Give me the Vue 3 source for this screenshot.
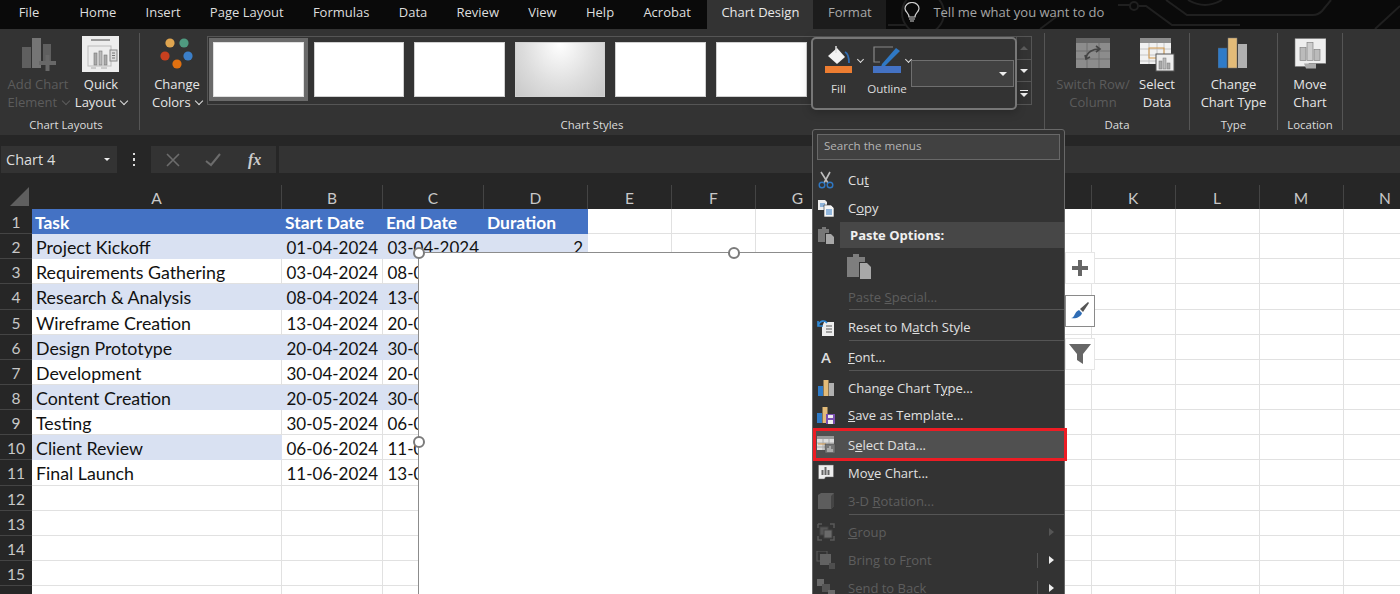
<template>
  <div class="excel">
    <!-- tab strip -->
    <div class="tabbar">
      <svg class="circuit" width="1400" height="29" viewBox="0 0 1400 29">
        <g fill="none" stroke="#202020" stroke-width="2">
          <circle cx="923" cy="13" r="21" />
          <path d="M1118 5 H1130 M1139 6 H1146 L1172 25 H1240" />
          <circle cx="1134" cy="6" r="4" />
          <path d="M1166 0 L1187 15 H1313 Q1318 15 1322 11 L1331 0" />
          <path d="M1188 0 Q1205 10 1222 0" />
          <path d="M1375 29 L1400 6" />
          <path d="M888 25 H905 M1040 29 L1060 14" />
        </g>
      </svg>
      <div v-for="tab in tabs" :key="tab" class="tab" :class="tabClass(tab)">{{ tab }}</div>
      <svg class="bulb" width="16" height="22" viewBox="0 0 16 22">
        <path d="M5 15 C5 11 1 10 1 6.5 A7 6 0 0 1 15 6.5 C15 10 11 11 11 15 Z" fill="none" stroke="#d0d0d0" stroke-width="1.2" />
        <path d="M5 17 H11 M6 19 H10" stroke="#d0d0d0" stroke-width="1.2" />
      </svg>
      <div class="tell">Tell me what you want to do</div>
    </div>

    <!-- ribbon -->
    <div class="ribbon">
      <div class="group layouts">
        <div class="group-body">
          <div class="rbtn w76 off">
            <svg class="ricon" width="36" height="34" viewBox="0 0 36 34">
              <rect x="2" y="10" width="9" height="21" fill="#5f5f5f" />
              <rect x="12" y="1" width="9" height="30" fill="#757575" />
              <rect x="23" y="7" width="8" height="18" fill="#5f5f5f" />
              <rect x="19" y="24" width="17" height="4" fill="#686868" />
              <rect x="25.5" y="18" width="4" height="16" fill="#686868" />
            </svg>
            <div>Add Chart</div>
            <div>Element <span class="chev off-chev"></span></div>
          </div>
          <div class="rbtn w50">
            <svg class="ricon" width="38" height="36" viewBox="0 0 38 36">
              <rect width="37" height="36" fill="#ededed" />
              <rect x="9" y="3" width="19" height="2" fill="#999" />
              <rect x="6" y="10" width="23" height="20" fill="none" stroke="#bbb" />
              <rect x="12" y="17" width="3" height="12" fill="#aaa" stroke="#777" stroke-width=".6" />
              <rect x="17" y="15" width="3" height="14" fill="#bbb" stroke="#777" stroke-width=".6" />
              <rect x="22" y="19" width="3" height="10" fill="#aaa" stroke="#777" stroke-width=".6" />
              <rect x="28" y="14" width="7" height="11" fill="#ddd" stroke="#888" />
              <path d="M30 17 H33 M30 19.5 H33 M30 22 H33" stroke="#777" />
              <path d="M9 32 H14 M19 32 H25" stroke="#aaa" />
            </svg>
            <div>Quick</div>
            <div>Layout <span class="chev"></span></div>
          </div>
        </div>
        <div class="group-label">Chart Layouts</div>
      </div>
      <div class="sep"></div>

      <div class="group styles">
        <div class="group-body">
          <div class="rbtn w60">
            <svg class="ricon" width="34" height="34" viewBox="0 0 34 34">
              <circle cx="10" cy="6" r="4.6" fill="#dfa550" />
              <circle cx="24" cy="6" r="4.6" fill="#4f9a80" />
              <circle cx="5" cy="19" r="4.6" fill="#c8401f" />
              <circle cx="28" cy="19" r="4.6" fill="#3b7fc9" />
              <circle cx="17" cy="27" r="4.6" fill="#e07010" />
            </svg>
            <div>Change</div>
            <div>Colors <span class="chev"></span></div>
          </div>
          <div class="gallery">
            <div class="thumbs">
              <div v-for="n in 6" :key="n" class="thumb" :class="{ picked: n === 1, shaded: n === 4 }"></div>
            </div>
            <div class="scroller">
              <div class="scroll-btn"><span class="tri up"></span></div>
              <div class="scroll-btn"><span class="tri"></span></div>
              <div class="scroll-btn"><span class="tri lined"></span></div>
            </div>
          </div>
        </div>
        <div class="group-label">Chart Styles</div>
      </div>
      <div class="sep"></div>

      <div class="group data">
        <div class="group-body">
          <div class="rbtn w76 off">
            <svg class="ricon" width="36" height="32" viewBox="0 0 36 32">
              <rect x="1" width="34" height="30" fill="#8c8c8c" />
              <rect x="1" width="34" height="5" fill="#666" />
              <path d="M1 13 H35 M1 21 H35 M12 5 V30 M24 5 V30" stroke="#6e6e6e" />
              <path d="M11 20 C12 14 18 11 24 11 M21 8 L25 11 L21 14 M10 17 L11 21 L15 19" fill="none" stroke="#444" stroke-width="1.6" />
            </svg>
            <div>Switch Row/</div>
            <div>Column</div>
          </div>
          <div class="rbtn w52">
            <svg class="ricon" width="36" height="34" viewBox="0 0 36 34">
              <rect x="1" y="1" width="31" height="26" fill="#f1f1f1" />
              <rect x="1" y="1" width="31" height="5" fill="#8d8d8d" />
              <path d="M1 12 H32 M1 18 H32 M1 24 H32 M10 6 V27 M18 6 V27 M25 6 V27" stroke="#c4c4c4" />
              <rect x="10" y="11" width="15" height="10" fill="none" stroke="#d59a4a" />
              <rect x="17" y="17" width="18" height="17" fill="#eee" stroke="#555" />
              <rect x="20" y="24" width="3" height="8" fill="#aaa" stroke="#777" stroke-width=".5" />
              <rect x="24" y="21" width="3" height="11" fill="#bbb" stroke="#777" stroke-width=".5" />
              <rect x="28" y="26" width="3" height="6" fill="#aaa" stroke="#777" stroke-width=".5" />
            </svg>
            <div>Select</div>
            <div>Data</div>
          </div>
        </div>
        <div class="group-label">Data</div>
      </div>
      <div class="sep"></div>

      <div class="group type">
        <div class="group-body center">
          <div class="rbtn">
            <svg class="ricon" width="30" height="32" viewBox="0 0 30 32">
              <rect y="10" width="9" height="20" fill="#2f7bc8" stroke="#555" stroke-width=".5" />
              <rect x="10" width="9" height="30" fill="#e3bb78" stroke="#777" stroke-width=".5" />
              <rect x="20" y="6" width="9" height="24" fill="#b0b0b0" />
            </svg>
            <div>Change</div>
            <div>Chart Type</div>
          </div>
        </div>
        <div class="group-label">Type</div>
      </div>
      <div class="sep"></div>

      <div class="group location">
        <div class="group-body center">
          <div class="rbtn">
            <svg class="ricon" width="32" height="35" viewBox="0 0 32 35">
              <path d="M1 2 H32 V27 H15 L13 30 H1 Z" fill="#eee" stroke="#777" stroke-width=".6" />
              <path d="M10 27 L12 32 H22 L22 27" fill="#aaa" />
              <rect x="6" y="11" width="6" height="13" fill="#bbb" stroke="#777" stroke-width=".6" />
              <rect x="13" y="6" width="6" height="18" fill="#ccc" stroke="#777" stroke-width=".6" />
              <rect x="20" y="13" width="6" height="11" fill="#bbb" stroke="#777" stroke-width=".6" />
            </svg>
            <div>Move</div>
            <div>Chart</div>
          </div>
        </div>
        <div class="group-label">Location</div>
      </div>
      <div class="sep"></div>
    </div>

    <!-- name box and formula bar -->
    <div class="formula">
      <div class="namebox">Chart 4<span class="tri small"></span></div>
      <div class="dots"><i></i><i></i><i></i></div>
      <div class="fbtns">
        <svg width="14" height="14" viewBox="0 0 14 14"><path d="M1 1 L13 13 M13 1 L1 13" stroke="#6c6c6c" stroke-width="1.6" /></svg>
        <svg width="16" height="14" viewBox="0 0 16 14"><path d="M1 8 L6 12 L15 1" fill="none" stroke="#6c6c6c" stroke-width="2" /></svg>
        <span class="fx">fx</span>
      </div>
      <div class="finput"></div>
    </div>

    <!-- sheet -->
    <div class="sheet">
      <div class="corner"><span></span></div>
      <div v-for="c in columns" :key="c" class="colhead">{{ c }}</div>
      <template v-for="(row, r) in rows" :key="r">
        <div class="rowhead">{{ r < 15 ? r + 1 : '' }}</div>
        <div v-for="(cell, i) in row" :key="i" class="cell" :class="cell.cls">{{ cell.text }}</div>
      </template>
    </div>

    <!-- selected chart -->
    <div class="chart">
      <span class="handle h-tl"></span>
      <span class="handle h-tm"></span>
      <span class="handle h-ml"></span>
    </div>

    <!-- chart side buttons -->
    <div class="side side-plus">
      <svg width="16" height="16" viewBox="0 0 16 16"><path d="M0 6 H6 V0 H10 V6 H16 V10 H10 V16 H6 V10 H0 Z" fill="#666" /></svg>
    </div>
    <div class="side side-brush">
      <svg width="20" height="20" viewBox="0 0 20 20">
        <path d="M10 8 L18 1 L19 2 L13 11 Z" fill="#555" />
        <path d="M1 17 C5 17 4 11 9 9 L12 12 C11 16 6 18 1 17 Z" fill="#2f6db5" />
      </svg>
    </div>
    <div class="side side-filter">
      <svg width="22" height="22" viewBox="0 0 22 22"><path d="M0 1 H22 L14 11 V21 L8 17 V11 Z" fill="#666" /></svg>
    </div>

    <!-- mini toolbar -->
    <div class="mini">
      <div class="mini-item fill">
        <svg width="28" height="27" viewBox="0 0 28 27">
          <path d="M3 10 L12 2 L20 11 L12 18 Z" fill="#f2f2f2" />
          <path d="M11 0 V7" stroke="#ddd" stroke-width="1.5" />
          <path d="M20 6 Q24 8 24 17" fill="none" stroke="#2f6db5" stroke-width="1.8" />
          <rect y="20" width="27" height="7" fill="#ed7d31" />
        </svg>
        <span class="chev mini-chev"></span>
        <div>Fill</div>
      </div>
      <div class="mini-item outline">
        <svg width="29" height="27" viewBox="0 0 29 27">
          <path d="M20 1 H1 V16 H7" fill="none" stroke="#888" stroke-width="1.2" />
          <path d="M9 18 L23 2 L27 5 L12 20 L8 21 Z" fill="#2f78c4" />
          <rect y="20" width="28" height="7" fill="#4472c4" />
        </svg>
        <span class="chev mini-chev"></span>
        <div>Outline</div>
      </div>
      <div class="combo"><span class="tri"></span></div>
    </div>

    <!-- context menu -->
    <div class="menu">
      <div class="search">Search the menus</div>

      <div class="mrow">
        <svg class="micon" width="18" height="18" viewBox="0 0 18 18">
          <path d="M4 1 L11 12 M13 1 L7 12" stroke="#bdbdbd" stroke-width="1.6" />
          <circle cx="5" cy="14" r="2.8" fill="none" stroke="#2f78c4" stroke-width="1.4" />
          <circle cx="13" cy="14" r="2.8" fill="none" stroke="#2f78c4" stroke-width="1.4" />
        </svg>
        <span class="mtext">Cu<u>t</u></span>
      </div>
      <div class="mrow">
        <svg class="micon" width="18" height="18" viewBox="0 0 18 18">
          <path d="M1 1 H8 L10 3 V11 H1 Z" fill="#eee" />
          <path d="M3 5 H8 M3 7 H8" stroke="#2f78c4" />
          <path d="M7 6 H14 L17 9 V18 H7 Z" fill="#f6f6f6" stroke="#333" stroke-width=".6" />
          <path d="M9 11 H15 M9 13 H15 M9 15 H15" stroke="#2f78c4" />
        </svg>
        <span class="mtext">C<u>o</u>py</span>
      </div>
      <div class="mrow h26">
        <svg class="micon" width="18" height="18" viewBox="0 0 18 18">
          <path d="M1 3 H5 V1 H9 V3 H12 V7 H8 V16 H1 Z" fill="#777" />
          <path d="M9 8 H14 L17 11 V18 H9 Z" fill="#a8a8a8" />
        </svg>
        <div class="paste-band">Paste Options:</div>
      </div>
      <div class="mrow h37">
        <svg class="paste-big" width="25" height="27" viewBox="0 0 25 27">
          <path d="M0 4 H6 V1 H12 V4 H18 V9 H12 V24 H0 Z" fill="#7e7e7e" />
          <path d="M13 10 H20 L24 14 V26 H13 Z" fill="#a8a8a8" />
        </svg>
      </div>
      <div class="mrow h24 off">
        <span class="micon"></span>
        <span class="mtext">Paste <u>S</u>pecial...</span>
      </div>
      <div class="msep"></div>
      <div class="mrow h30 pad">
        <svg class="micon" width="20" height="18" viewBox="0 0 20 18">
          <path d="M8 4 H18 V18 H6 V9 Z" fill="#eee" />
          <path d="M10 8 H16 M10 11 H16 M10 14 H16" stroke="#555" />
          <path d="M2 3 V8 H7 M2 8 C4 2 9 2 11 5" fill="none" stroke="#2f8ad8" stroke-width="1.6" />
        </svg>
        <span class="mtext">Reset to M<u>a</u>tch Style</span>
      </div>
      <div class="msep"></div>
      <div class="mrow h29 pad">
        <span class="micon letter">A</span>
        <span class="mtext"><u>F</u>ont...</span>
      </div>
      <div class="msep"></div>
      <div class="mrow h31 pad">
        <svg class="micon" width="16" height="16" viewBox="0 0 16 16">
          <rect y="6" width="5" height="10" fill="#2f7bc8" />
          <rect x="5.5" width="5" height="16" fill="#e3bb78" />
          <rect x="11" y="3" width="5" height="13" fill="#b0b0b0" />
        </svg>
        <span class="mtext">Change Chart T<u>y</u>pe...</span>
      </div>
      <div class="mrow h26">
        <svg class="micon" width="18" height="18" viewBox="0 0 18 18">
          <rect y="7" width="5" height="10" fill="#2f7bc8" />
          <rect x="5.5" y="1" width="5" height="16" fill="#e3bb78" />
          <rect x="9" y="8" width="9" height="10" fill="#7a4fb0" />
          <rect x="11" y="9" width="5" height="3" fill="#eee" />
          <rect x="11" y="14" width="5" height="4" fill="#eee" />
        </svg>
        <span class="mtext"><u>S</u>ave as Template...</span>
      </div>
      <div class="mrow picked">
        <svg class="micon" width="18" height="17" viewBox="0 0 18 17">
          <rect width="17" height="14" fill="#ddd" />
          <rect width="17" height="3" fill="#999" />
          <path d="M0 7 H17 M0 11 H17 M6 3 V14 M12 3 V14" stroke="#aaa" />
          <path d="M1 8 H9" stroke="#d59a4a" />
          <rect x="8" y="8" width="10" height="9" fill="#777" stroke="#444" stroke-width=".5" />
          <path d="M11 16 V12 M13 16 V10 M15 16 V13" stroke="#ddd" />
        </svg>
        <span class="mtext">S<u>e</u>lect Data...</span>
      </div>
      <div class="mrow h23">
        <svg class="micon" width="17" height="17" viewBox="0 0 17 17">
          <path d="M1 1 H16 V13 H8 L7 15 H1 Z" fill="#eee" stroke="#666" stroke-width=".5" />
          <path d="M5 11 V6 M8 11 V3 M11 11 V6" stroke="#666" stroke-width="2" />
        </svg>
        <span class="mtext">Mo<u>v</u>e Chart...</span>
      </div>
      <div class="mrow h30 pad off">
        <svg class="micon" width="16" height="16" viewBox="0 0 16 16">
          <path d="M0 2 L3 0 H16 V13 L13 16 H0 Z" fill="#5d5d5d" />
          <path d="M13 3 L16 0 V13 L13 16 Z" fill="#444" />
        </svg>
        <span class="mtext">3-D <u>R</u>otation...</span>
      </div>
      <div class="msep"></div>
      <div class="mrow h31 pad off">
        <svg class="micon" width="18" height="18" viewBox="0 0 18 18">
          <path d="M1 1 H5 M13 1 H17 V5 M17 13 V17 H13 M5 17 H1 V13 M1 5 V1" fill="none" stroke="#5a5a5a" stroke-width="1.5" />
          <rect x="3" y="4" width="8" height="8" fill="#565656" stroke="#444" />
          <rect x="7" y="7" width="8" height="8" fill="#6a6a6a" stroke="#444" />
        </svg>
        <span class="mtext"><u>G</u>roup</span>
        <span class="arrow dim"></span>
      </div>
      <div class="mrow off">
        <svg class="micon" width="18" height="18" viewBox="0 0 18 18">
          <rect y="0" width="10" height="10" fill="none" stroke="#5a5a5a" />
          <rect x="3" y="3" width="11" height="11" fill="#626262" />
          <rect x="12" y="12" width="6" height="6" fill="#4e4e4e" />
        </svg>
        <span class="mtext">Bring to F<u>r</u>ont</span>
        <span class="split"></span><span class="arrow"></span>
      </div>
      <div class="mrow off">
        <svg class="micon" width="18" height="18" viewBox="0 0 18 18">
          <rect width="7" height="7" fill="#6a6a6a" />
          <rect x="5" y="5" width="8" height="8" fill="#555" />
          <rect x="11" y="11" width="7" height="7" fill="#6a6a6a" />
        </svg>
        <span class="mtext">Send to Bac<u>k</u></span>
        <span class="split"></span><span class="arrow"></span>
      </div>
    </div>
  </div>
</template>

<script setup>
import { computed } from 'vue'

const tabs = ['File', 'Home', 'Insert', 'Page Layout', 'Formulas', 'Data', 'Review', 'View', 'Help', 'Acrobat', 'Chart Design', 'Format']
const columns = ['A', 'B', 'C', 'D', 'E', 'F', 'G', 'H', 'I', 'J', 'K', 'L', 'M', 'N']

const tasks = [
  ['Project Kickoff', '01-04-2024', '03-04-2024', '2'],
  ['Requirements Gathering', '03-04-2024', '08-04-2024', '5'],
  ['Research & Analysis', '08-04-2024', '13-04-2024', '5'],
  ['Wireframe Creation', '13-04-2024', '20-04-2024', '7'],
  ['Design Prototype', '20-04-2024', '30-04-2024', '10'],
  ['Development', '30-04-2024', '20-05-2024', '20'],
  ['Content Creation', '20-05-2024', '30-05-2024', '10'],
  ['Testing', '30-05-2024', '06-06-2024', '7'],
  ['Client Review', '06-06-2024', '11-06-2024', '5'],
  ['Final Launch', '11-06-2024', '13-06-2024', '2']
]

function tabClass(tab) {
  return {
    'tab-file': tab === 'File',
    'tab-active': tab === 'Chart Design',
    'tab-format': tab === 'Format'
  }
}

// header row, ten task rows, then empty rows down to the window edge
const rows = computed(() => {
  const out = []
  const header = ['Task', 'Start Date', 'End Date', 'Duration']
  out.push(columns.map((c, i) => (i < 4 ? { text: header[i], cls: 'head' } : { text: '', cls: '' })))
  tasks.forEach((task, r) => {
    out.push(columns.map((c, i) => {
      if (i > 3) return { text: '', cls: '' }
      // row 10 only has the first column banded
      const shaded = r % 2 === 0 && (r !== 8 || i === 0)
      return { text: task[i], cls: { shaded, num: i > 0 } }
    }))
  })
  for (let r = 0; r < 5; r++) {
    out.push(columns.map(() => ({ text: '', cls: '' })))
  }
  return out
})
</script>

<style scoped>
.excel {
  position: relative;
  width: 1400px;
  height: 594px;
  overflow: hidden;
  background: #262626;
  display: flex;
  flex-direction: column;
  font-family: 'Open Sans', 'Noto Sans', sans-serif;
  color: #e6e6e6;
}

.tabbar {
  position: relative;
  height: 29px;
  flex: none;
  background: #0a0a0a;
  display: flex;
  align-items: stretch;
  font-size: 13px;
  line-height: 25px;
}
.circuit {
  position: absolute;
  left: 0;
  top: 0;
}
.tab {
  position: relative;
  padding: 0 14.65px;
  color: #dedede;
  white-space: nowrap;
}
.tab-file {
  margin-left: 4px;
  margin-right: 11px;
}
.tab-active {
  margin-left: 2px;
  padding: 0 14px;
  background: #333;
  color: #e8e8e8;
}
.tab-format {
  background: #1c1c1c;
  color: #a8a8a8;
}
.bulb {
  position: relative;
  margin: 2px 13px 0 18px;
}
.tell {
  position: relative;
  color: #a5a5a5;
  white-space: nowrap;
}

.ribbon {
  height: 106px;
  flex: none;
  background: #333;
  display: flex;
  font-size: 13px;
}
.group {
  display: flex;
  flex-direction: column;
  flex: none;
}
.layouts { width: 139px; }
.styles { width: 904px; }
.data { width: 144px; }
.type { width: 87px; }
.location { width: 64px; }
.group-body {
  flex: 1;
  display: flex;
  min-height: 0;
}
.group-body.center {
  justify-content: center;
}
.styles .group-body { padding-left: 7px; }
.data .group-body { padding-left: 10px; }
.group-label {
  height: 20px;
  line-height: 20px;
  text-align: center;
  font-size: 11.4px;
  color: #dcdcdc;
}
.layouts .group-label { padding-right: 7px; }
.sep {
  width: 1px;
  flex: none;
  margin: 4px 0 5px;
  background: #555;
}
.rbtn {
  padding-top: 7px;
  display: flex;
  flex-direction: column;
  align-items: center;
  line-height: 18px;
  white-space: nowrap;
}
.rbtn.off { color: #5c5c5c; }
.w76 { width: 76px; }
.w50 { width: 50px; }
.w52 { width: 52px; }
.w60 { width: 60px; flex: none; }
.ricon {
  height: 36px;
  margin-bottom: 3px;
  flex: none;
}
.chev {
  display: inline-block;
  width: 5px;
  height: 5px;
  margin: 0 0 3px 2px;
  border-right: 1.5px solid #ddd;
  border-bottom: 1.5px solid #ddd;
  transform: rotate(45deg);
}
.off-chev {
  border-color: #5c5c5c;
}

.gallery {
  width: 825px;
  height: 69px;
  margin-top: 7px;
  flex: none;
  display: flex;
  border: 1px solid #555;
  box-sizing: border-box;
}
.thumbs {
  flex: 1;
  display: flex;
  gap: 10px;
  padding: 5px 0 0 5px;
}
.thumb {
  width: 90.6px;
  height: 55px;
  flex: none;
  background: #fff;
  border: 1px solid #d0d0d0;
  box-sizing: border-box;
}
.thumb.picked {
  outline: 4px solid #6a6a6a;
  border-color: #e0e0e0;
}
.thumb.shaded {
  background: radial-gradient(ellipse at 50% 0, #fff 0, #dcdcdc 60%, #c8c8c8 100%);
}
.scroller {
  width: 14px;
  flex: none;
  border-left: 1px solid #555;
  display: flex;
  flex-direction: column;
}
.scroll-btn {
  flex: 1;
  display: flex;
  align-items: center;
  justify-content: center;
  border-bottom: 1px solid #555;
}
.scroll-btn:last-child { border-bottom: 0; }
.tri {
  display: inline-block;
  width: 0;
  height: 0;
  border-left: 4px solid transparent;
  border-right: 4px solid transparent;
  border-top: 4px solid #eee;
}
.tri.up {
  border-top: 0;
  border-bottom: 4px solid #5c5c5c;
}
.tri.lined {
  position: relative;
  margin-top: 4px;
}
.tri.lined::before {
  content: '';
  position: absolute;
  left: -4px;
  top: -7px;
  width: 8px;
  height: 1px;
  background: #eee;
}

.formula {
  height: 50px;
  flex: none;
  box-sizing: border-box;
  padding: 11px 0 12px 1px;
  display: flex;
  background: #262626;
}
.namebox {
  width: 116px;
  background: #333;
  font-size: 14.5px;
  line-height: 27px;
  padding-left: 5px;
  box-sizing: border-box;
  display: flex;
  align-items: center;
  justify-content: space-between;
  padding-right: 7px;
  color: #ddd;
}
.tri.small {
  border-left-width: 3px;
  border-right-width: 3px;
  border-top-width: 3px;
}
.dots {
  width: 34px;
  display: flex;
  flex-direction: column;
  align-items: center;
  justify-content: center;
  gap: 3px;
}
.dots i {
  width: 2.5px;
  height: 2.5px;
  background: #ddd;
}
.fbtns {
  width: 125px;
  background: #333;
  display: flex;
  align-items: center;
  gap: 25px;
  padding-left: 15px;
  box-sizing: border-box;
}
.fx {
  font-family: 'Liberation Serif', serif;
  font-style: italic;
  font-weight: 700;
  font-size: 16px;
  color: #ccc;
  margin-left: 2px;
}
.finput {
  flex: 1;
  margin-left: 3px;
  background: #333;
}

.sheet {
  display: grid;
  grid-template-columns: 32px 250px 101px 101px 104px 84px 84px 84px 84px 84px 84px 83.5px 84px 84px 84px;
  grid-template-rows: 24px;
  grid-auto-rows: 25.15px;
  font-family: Lato, 'Open Sans', sans-serif;
}
.corner {
  background: #262626;
  position: relative;
}
.corner span {
  position: absolute;
  left: 10px;
  top: 2px;
  width: 0;
  height: 0;
  border-left: 19px solid transparent;
  border-bottom: 19px solid #5f5f5f;
}
.colhead {
  background: #262626;
  border-right: 1px solid #444;
  box-sizing: border-box;
  text-align: center;
  line-height: 26px;
  font-size: 15.5px;
  color: #c8c8c8;
}
.rowhead {
  background: #262626;
  border-bottom: 1px solid #444;
  box-sizing: border-box;
  text-align: center;
  line-height: 26px;
  font-size: 15.5px;
  color: #c8c8c8;
}
.cell {
  background: #fff;
  color: #111;
  border-right: 1px solid #e1e1e1;
  border-bottom: 1px solid #e1e1e1;
  box-sizing: border-box;
  font-size: 17.8px;
  line-height: 27px;
  padding: 0 4px;
  white-space: nowrap;
  overflow: hidden;
}
.cell.num {
  text-align: right;
  font-size: 17px;
}
.cell.shaded {
  background: #d9e1f2;
  border-color: #d9e1f2;
}
.cell.head {
  background: #4472c4;
  border-color: #4472c4;
  color: #fff;
  font-weight: 700;
  font-size: 17.4px;
  padding: 0 3px;
}

.chart {
  position: absolute;
  left: 418px;
  top: 252px;
  width: 630px;
  height: 400px;
  background: #fff;
  border: 1px solid #8c8c8c;
}
.handle {
  position: absolute;
  width: 8px;
  height: 8px;
  margin: -6px 0 0 -6px;
  background: #fff;
  border: 2px solid #7b7b7b;
  border-radius: 50%;
}
.h-tl { left: 0; top: 0; }
.h-tm { left: 315px; top: 0; }
.h-ml { left: 0; top: 189px; }

.side {
  position: absolute;
  left: 1065px;
  width: 30px;
  height: 32px;
  background: #fff;
  border: 1px solid #e6e6e6;
  box-sizing: border-box;
  display: flex;
  align-items: center;
  justify-content: center;
}
.side-plus { top: 252px; }
.side-brush {
  top: 295px;
  border-color: #8a8a8a;
}
.side-filter { top: 338px; }

.mini {
  position: absolute;
  left: 811px;
  top: 37px;
  width: 206px;
  height: 73px;
  box-sizing: border-box;
  background: #333;
  border: 2px solid #777;
  border-radius: 5px;
  box-shadow: 0 2px 10px rgba(0, 0, 0, 0.25);
  font-size: 11.6px;
  color: #ddd;
}
.mini-item {
  position: absolute;
  top: 7px;
  text-align: center;
}
.mini-item svg { display: block; }
.mini-item div {
  margin-top: 8px;
  line-height: 16px;
}
.mini-item.fill { left: 12px; width: 27px; }
.mini-item.outline { left: 60px; width: 28px; }
.mini-item.outline div {
  margin-left: -6px;
  margin-right: -6px;
}
.mini-chev {
  position: absolute;
  left: 33px;
  top: 11px;
  margin: 0;
  width: 4px;
  height: 4px;
}
.combo {
  position: absolute;
  left: 98px;
  top: 21px;
  width: 103px;
  height: 27px;
  box-sizing: border-box;
  background: #414141;
  border: 1px solid #6f6f6f;
  display: flex;
  align-items: center;
  justify-content: flex-end;
  padding-right: 6px;
}

.menu {
  position: absolute;
  left: 812px;
  top: 129px;
  width: 253px;
  height: 480px;
  box-sizing: border-box;
  background: #333;
  border: 1px solid #686868;
  border-radius: 3px;
  font-size: 13px;
  color: #e0e0e0;
}
.search {
  height: 26px;
  margin: 4px 4px 6px;
  box-sizing: border-box;
  background: #414141;
  border: 1px solid #686868;
  font-size: 11.6px;
  line-height: 22px;
  padding-left: 6px;
  color: #b4b4b4;
}
.mrow {
  height: 28px;
  box-sizing: border-box;
  display: flex;
  align-items: center;
  white-space: nowrap;
}
.h23 { height: 23px; }
.h24 { height: 24px; }
.h26 { height: 26px; }
.h29 { height: 29px; }
.h30 { height: 30px; }
.h31 { height: 31px; }
.h37 { height: 37px; }
.pad { padding-top: 3px; }
.mrow.off { color: #5e5e5e; }
.micon {
  width: 20px;
  margin-left: 3px;
  flex: none;
}
.mtext { margin-left: 12px; }
.letter {
  font-weight: 600;
  font-size: 15px;
  text-align: center;
  color: #ddd;
}
.paste-band {
  flex: 1;
  height: 100%;
  margin-left: 4px;
  padding-left: 10px;
  background: #474747;
  font-weight: 700;
  line-height: 26px;
  color: #f0f0f0;
}
.paste-big { margin-left: 34px; }
.msep {
  height: 1px;
  margin-left: 36px;
  background: #555;
}
.mrow.picked {
  height: 33px;
  width: 254px;
  background: #505050;
  border: 3px solid #ed1c24;
}
.mrow.picked .micon { margin-left: 0; }
.arrow {
  position: absolute;
  left: 236px;
  width: 0;
  height: 0;
  border-top: 4px solid transparent;
  border-bottom: 4px solid transparent;
  border-left: 5px solid #eee;
}
.arrow.dim { border-left-color: #555; }
.split {
  position: absolute;
  left: 224px;
  width: 1px;
  height: 15px;
  background: #555;
}
</style>
